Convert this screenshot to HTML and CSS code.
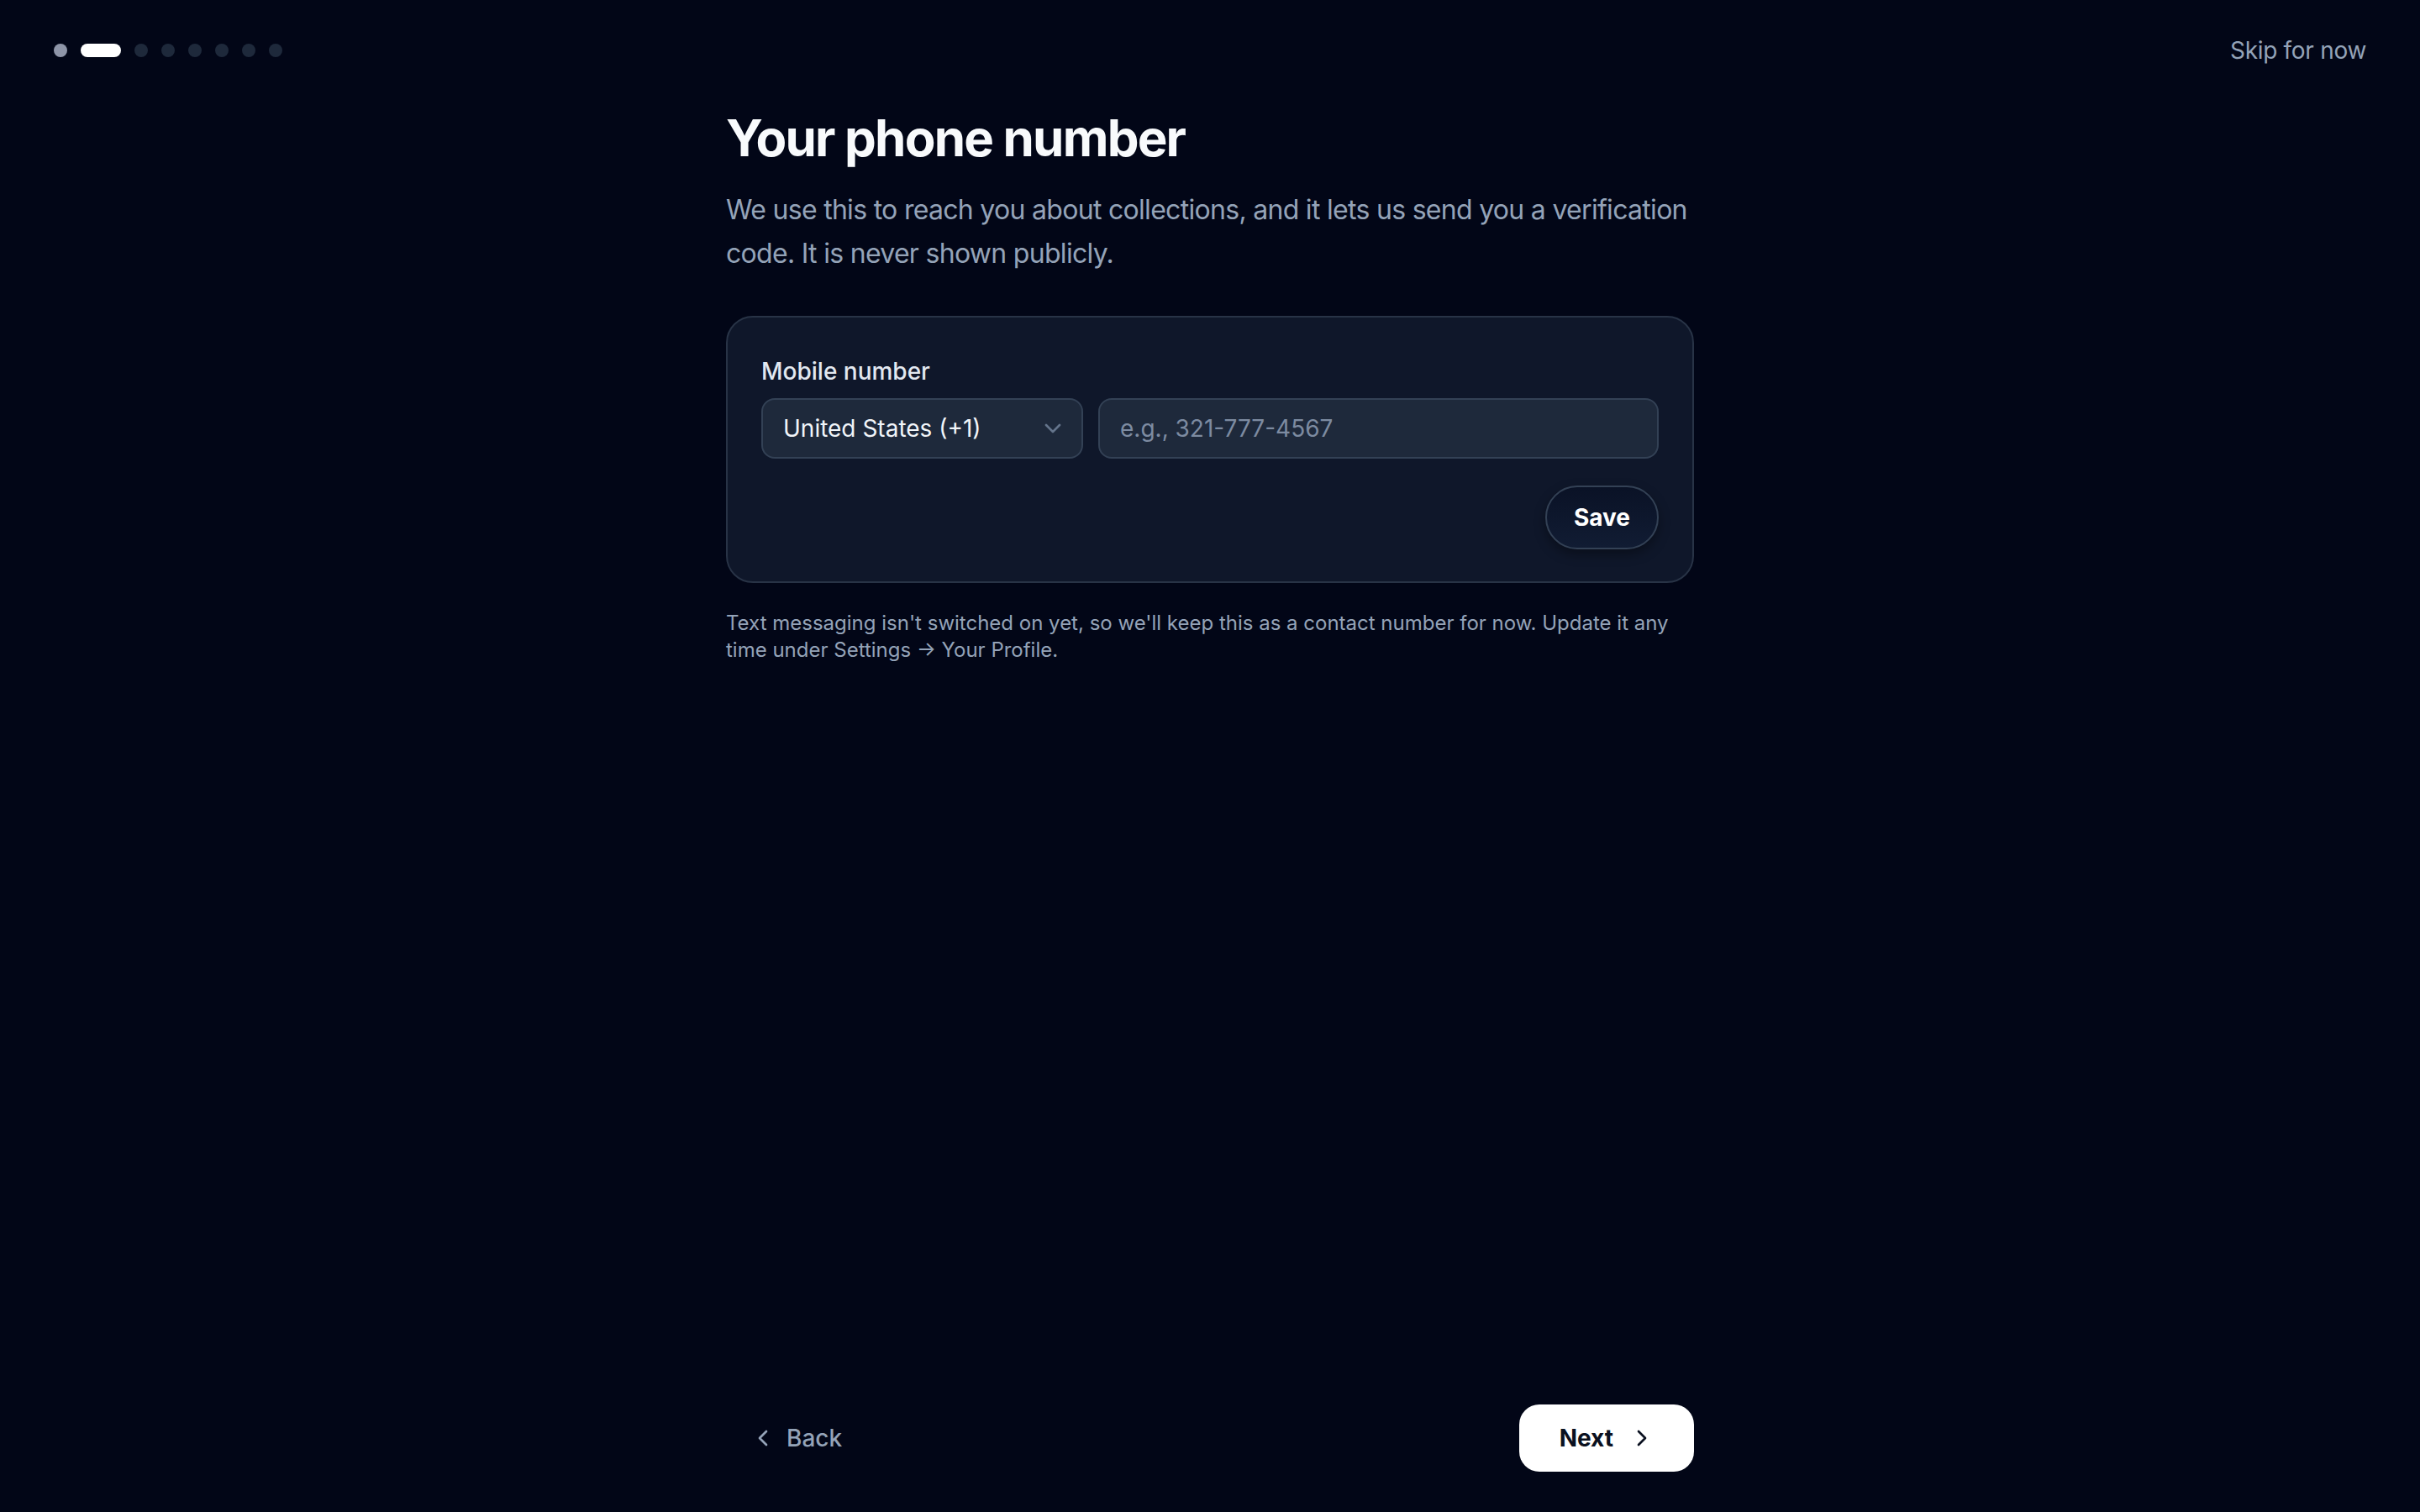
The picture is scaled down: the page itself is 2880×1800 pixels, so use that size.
FILE: index.html
```html
<!DOCTYPE html>
<html lang="en">
<head>
<meta charset="utf-8">
<title>Your phone number</title>
<link rel="stylesheet" href="styles.css">
</head>
<body>
<div class="page">
  <header class="topbar">
    <div class="steps">
      <span class="dot dot-done"></span>
      <span class="dot dot-active"></span>
      <span class="dot"></span>
      <span class="dot"></span>
      <span class="dot"></span>
      <span class="dot"></span>
      <span class="dot"></span>
      <span class="dot"></span>
    </div>
    <a class="skip" href="#">Skip for now</a>
  </header>

  <main class="main">
    <div class="column">
      <h1 class="title">Your phone number</h1>
      <p class="lead">We use this to reach you about collections, and it lets us send you a verification code. It is never shown publicly.</p>

      <section class="card">
        <label class="label" for="phone">Mobile number</label>
        <div class="row">
          <div class="select">
            <span class="select-text">United States (+1)</span>
            <svg class="select-chevron" viewBox="0 0 24 24" fill="none" stroke="currentColor" stroke-width="2" stroke-linecap="round" stroke-linejoin="round"><path d="m6 9 6 6 6-6"/></svg>
          </div>
          <input id="phone" class="phone" type="tel" placeholder="e.g., 321-777-4567">
        </div>
        <div class="actions">
          <button class="save" type="button">Save</button>
        </div>
      </section>

      <p class="note">Text messaging isn't switched on yet, so we'll keep this as a contact number for now. Update it any time under Settings → Your Profile.</p>
    </div>
  </main>

  <footer class="footer">
    <div class="column nav">
      <button class="back" type="button">
        <svg class="icon" viewBox="0 0 24 24" fill="none" stroke="currentColor" stroke-width="2" stroke-linecap="round" stroke-linejoin="round"><path d="m15 18-6-6 6-6"/></svg>
        <span>Back</span>
      </button>
      <button class="next" type="button">
        <span>Next</span>
        <svg class="icon" viewBox="0 0 24 24" fill="none" stroke="currentColor" stroke-width="2" stroke-linecap="round" stroke-linejoin="round"><path d="m9 18 6-6-6-6"/></svg>
      </button>
    </div>
  </footer>
</div>
</body>
</html>
```

FILE: styles.css
```css
* {
  box-sizing: border-box;
}

html,
body {
  margin: 0;
  padding: 0;
  background: #020617;
}

body {
  font-family: Inter, "Noto Sans", "Liberation Sans", sans-serif;
  color: #f1f5f9;
  -webkit-font-smoothing: antialiased;
}

.page {
  height: 100vh;
  display: flex;
  flex-direction: column;
}

/* Top bar */
.topbar {
  height: 120px;
  padding: 0 64px;
  display: flex;
  align-items: center;
  justify-content: space-between;
  flex-shrink: 0;
}

.steps {
  display: flex;
  align-items: center;
  gap: 16px;
}

.dot {
  width: 16px;
  height: 16px;
  border-radius: 999px;
  background: #1e293b;
}

.dot-done {
  background: #8e95a8;
}

.dot-active {
  width: 48px;
  background: #ffffff;
}

.skip {
  font-size: 28px;
  line-height: 40px;
  letter-spacing: -0.3px;
  color: #94a3b8;
  text-decoration: none;
}

/* Main column */
.main {
  flex: 1;
  padding-top: 8px;
}

.column {
  width: 1152px;
  margin: 0 auto;
}

.title {
  margin: 0;
  font-size: 60px;
  line-height: 72px;
  font-weight: 700;
  letter-spacing: -0.03em;
  color: #f8fafc;
}

.lead {
  margin: 24px 0 0;
  font-size: 32px;
  line-height: 52px;
  letter-spacing: -0.7px;
  color: #94a3b8;
}

/* Card */
.card {
  margin-top: 48px;
  padding: 44px 40px 38px;
  border: 2px solid #283346;
  border-radius: 32px;
  background: #0f172a;
}

.label {
  display: block;
  font-size: 28px;
  line-height: 40px;
  font-weight: 500;
  color: #e2e8f0;
}

.row {
  margin-top: 12px;
  display: flex;
  gap: 18px;
}

.select {
  width: 383px;
  height: 72px;
  padding: 0 18px 0 24px;
  display: flex;
  align-items: center;
  justify-content: space-between;
  border: 2px solid #334155;
  border-radius: 16px;
  background: #1e293b;
}

.select-text {
  font-size: 28px;
  color: #f1f5f9;
}

.select-chevron {
  width: 32px;
  height: 32px;
  color: #64748b;
}

.phone {
  flex: 1;
  min-width: 0;
  height: 72px;
  padding: 0 24px;
  border: 2px solid #334155;
  border-radius: 16px;
  background: #1e293b;
  font-family: inherit;
  font-size: 28px;
  color: #f1f5f9;
  outline: none;
}

.phone::placeholder {
  color: #7d8ba1;
}

.actions {
  margin-top: 32px;
  display: flex;
  justify-content: flex-end;
}

.save {
  height: 76px;
  padding: 0 32px;
  border: 2px solid #334155;
  border-radius: 999px;
  background: linear-gradient(180deg, #0a1226, #111c33);
  box-shadow: 0 6px 14px rgba(0, 0, 0, 0.35);
  font-family: inherit;
  font-size: 28px;
  font-weight: 700;
  color: #ffffff;
}

.note {
  margin: 32px 0 0;
  font-size: 24px;
  line-height: 32px;
  color: #94a3b8;
}

/* Footer navigation */
.footer {
  padding-bottom: 48px;
  flex-shrink: 0;
}

.nav {
  display: flex;
  align-items: center;
  justify-content: space-between;
}

.icon {
  width: 32px;
  height: 32px;
  flex-shrink: 0;
}

.back {
  height: 80px;
  padding: 0 28px;
  display: flex;
  align-items: center;
  gap: 12px;
  border: 0;
  background: transparent;
  font-family: inherit;
  font-size: 28px;
  font-weight: 500;
  color: #94a3b8;
}

.next {
  height: 80px;
  padding: 0 46px 0 48px;
  display: flex;
  align-items: center;
  gap: 18px;
  border: 0;
  border-radius: 24px;
  background: #ffffff;
  font-family: inherit;
  font-size: 28px;
  font-weight: 700;
  color: #0b1120;
}
```
